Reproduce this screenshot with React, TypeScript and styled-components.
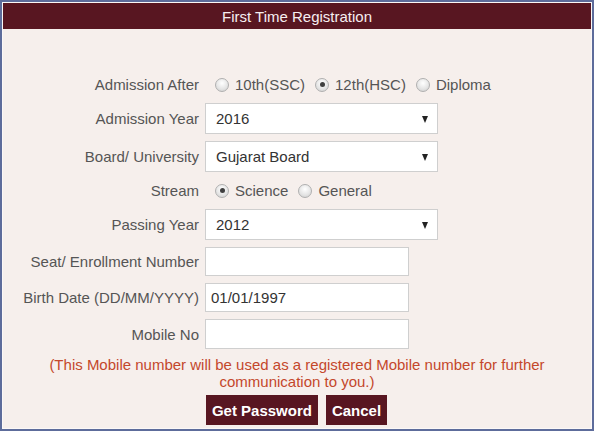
import React from "react";
import styled, { createGlobalStyle } from "styled-components";

const Global = createGlobalStyle`
  html, body { margin: 0; padding: 0; background: #ffffff; }
  body { font-family: "Liberation Sans", Arial, sans-serif; }
`;

const Panel = styled.div`
  width: 594px;
  height: 431px;
  box-sizing: border-box;
  border: 2px solid #5d6c9b;
  padding: 1px;
  background: #fbf8f7;
  display: flex;
  flex-direction: column;
`;

const Header = styled.div`
  height: 26px;
  background: #581621;
  color: #f6eef0;
  font-size: 15px;
  display: flex;
  align-items: center;
  justify-content: center;
  flex-shrink: 0;
`;

const Body = styled.div`
  flex: 1;
  background: #f6efec;
  padding-top: 44px;
  display: flex;
  flex-direction: column;
`;

const Form = styled.div`
  display: grid;
  grid-template-columns: 196px 1fr;
  column-gap: 6px;
  row-gap: 7px;
  align-items: center;
`;

const Label = styled.div`
  text-align: right;
  color: #555555;
  font-size: 15px;
  line-height: 17px;
`;

const Options = styled.div`
  display: flex;
  align-items: center;
  height: 23px;
`;

const Option = styled.label`
  display: flex;
  align-items: center;
  gap: 6px;
  margin-left: 10px;
  color: #555555;
  font-size: 15px;
`;

const Radio = styled.span<{ $checked?: boolean }>`
  width: 14px;
  height: 14px;
  box-sizing: border-box;
  border-radius: 50%;
  border: 1px solid #b0b0b0;
  background: radial-gradient(circle at 50% 35%, #ffffff 0%, #e6e6e6 55%, #cdcdcd 100%);
  display: flex;
  align-items: center;
  justify-content: center;
  &::after {
    content: "";
    width: 5px;
    height: 5px;
    border-radius: 50%;
    background: #3f3f3f;
    display: ${(p) => (p.$checked ? "block" : "none")};
  }
`;

const SelectBox = styled.div`
  width: 233px;
  height: 31px;
  box-sizing: border-box;
  border: 1px solid #cfcfcf;
  background: #ffffff;
  display: flex;
  align-items: center;
  justify-content: space-between;
  padding: 0 9px 0 10px;
  color: #333333;
  font-size: 15px;
`;

const Caret = styled.span`
  width: 0;
  height: 0;
  border-left: 3.5px solid transparent;
  border-right: 3.5px solid transparent;
  border-top: 7px solid #222222;
  margin-top: 1px;
`;

const TextBox = styled.div<{ $h?: number }>`
  width: 204px;
  height: ${(p) => p.$h ?? 29}px;
  box-sizing: border-box;
  border: 1px solid #cfcfcf;
  background: #ffffff;
  display: flex;
  align-items: center;
  padding: 0 5px;
  color: #333333;
  font-size: 15px;
`;

const Note = styled.div`
  margin-top: 7px;
  text-align: center;
  color: #c4472b;
  font-size: 15px;
  line-height: 17px;
  padding: 0 20px;
`;

const Buttons = styled.div`
  margin-top: 5px;
  display: flex;
  justify-content: center;
  gap: 8px;
  padding-right: 1px;
`;

const Button = styled.button`
  height: 30px;
  border: none;
  background: #581621;
  color: #ffffff;
  font-family: "Liberation Sans", Arial, sans-serif;
  font-weight: bold;
  font-size: 15px;
  padding: 0 6px;
  cursor: pointer;
`;

type Opt = { label: string; checked?: boolean };

const RadioGroup = ({ options }: { options: Opt[] }) => (
  <Options>
    {options.map((o) => (
      <Option key={o.label}>
        <Radio $checked={o.checked} />
        {o.label}
      </Option>
    ))}
  </Options>
);

const Select = ({ value }: { value: string }) => (
  <SelectBox>
    <span>{value}</span>
    <Caret />
  </SelectBox>
);

export default function App() {
  return (
    <>
      <Global />
      <Panel>
        <Header>First Time Registration</Header>
        <Body>
          <Form>
            <Label>Admission After</Label>
            <RadioGroup
              options={[
                { label: "10th(SSC)" },
                { label: "12th(HSC)", checked: true },
                { label: "Diploma" },
              ]}
            />
            <Label>Admission Year</Label>
            <Select value="2016" />
            <Label>Board/ University</Label>
            <Select value="Gujarat Board" />
            <Label>Stream</Label>
            <RadioGroup
              options={[{ label: "Science", checked: true }, { label: "General" }]}
            />
            <Label>Passing Year</Label>
            <Select value="2012" />
            <Label>Seat/ Enrollment Number</Label>
            <TextBox />
            <Label>Birth Date (DD/MM/YYYY)</Label>
            <TextBox>01/01/1997</TextBox>
            <Label>Mobile No</Label>
            <TextBox $h={30} />
          </Form>
          <Note>
            (This Mobile number will be used as a registered Mobile number for further
            <br />
            communication to you.)
          </Note>
          <Buttons>
            <Button>Get Password</Button>
            <Button>Cancel</Button>
          </Buttons>
        </Body>
      </Panel>
    </>
  );
}
